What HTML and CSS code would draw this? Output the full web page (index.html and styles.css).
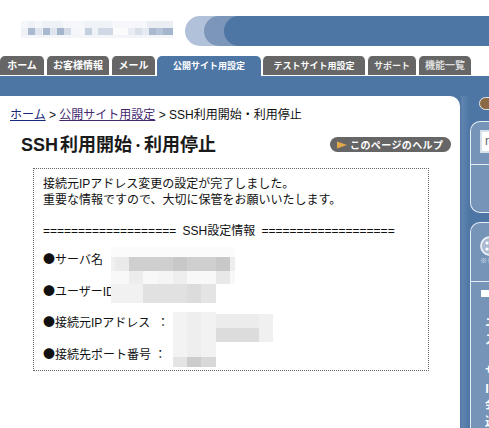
FILE: index.html
```html
<!DOCTYPE html>
<html lang="ja">
<head>
    <meta charset="UTF-8">
    <meta name="viewport" content="width=device-width, initial-scale=1.0">
    <title>SSH利用開始・利用停止</title>
    <link rel="stylesheet" href="styles.css">
</head>
<body>
    <header class="header">
        <svg class="logo" width="152" height="18" viewBox="21 20 152 18" shape-rendering="crispEdges" aria-hidden="true">
            <rect x="21" y="21" width="152" height="7" fill="#f6f7fa"/>
            <rect x="28" y="21" width="7" height="7" fill="#eef1f5"/>
            <rect x="42" y="21" width="21" height="7" fill="#eef1f5"/>
            <rect x="84" y="21" width="28" height="7" fill="#eff2f6"/>
            <rect x="147" y="21" width="26" height="7" fill="#eaeef3"/>
            <rect x="21" y="28" width="152" height="7" fill="#eef1f5"/>
            <rect x="28" y="28" width="7" height="7" fill="#a9bad0"/>
            <rect x="35" y="28" width="7" height="7" fill="#dfe5ee"/>
            <rect x="43" y="28" width="7" height="7" fill="#a9bad0"/>
            <rect x="50" y="28" width="7" height="7" fill="#dfe5ee"/>
            <rect x="57" y="28" width="7" height="7" fill="#a4b6cd"/>
            <rect x="64" y="28" width="7" height="7" fill="#d3dbe6"/>
            <rect x="71" y="28" width="14" height="7" fill="#f5f6f9"/>
            <rect x="85" y="28" width="7" height="7" fill="#c3cfde"/>
            <rect x="92" y="28" width="6" height="7" fill="#eef1f5"/>
            <rect x="98" y="28" width="15" height="7" fill="#cfd8e4"/>
            <rect x="113" y="28" width="15" height="7" fill="#fbfbfc"/>
            <rect x="128" y="28" width="7" height="7" fill="#e9edf3"/>
            <rect x="135" y="28" width="7" height="7" fill="#d8dfe9"/>
            <rect x="142" y="28" width="7" height="7" fill="#e6ebf1"/>
            <rect x="149" y="28" width="7" height="7" fill="#a9bad0"/>
            <rect x="156" y="28" width="7" height="7" fill="#b5c4d6"/>
            <rect x="163" y="28" width="10" height="7" fill="#a4b6cd"/>
            <rect x="21" y="35" width="152" height="3" fill="#f3f5f8"/>
        </svg>
        <div class="bar-light">
            <div class="bar-mid">
                <div class="bar-dark"></div>
            </div>
        </div>
    </header>

    <nav class="tabs">
        <a class="tab tab-home">ホーム</a>
        <a class="tab tab-account">お客様情報</a>
        <a class="tab tab-mail">メール</a>
        <a class="tab tab-site active">公開サイト用設定</a>
        <a class="tab tab-site small">テストサイト用設定</a>
        <a class="tab tab-support small">サポート</a>
        <a class="tab tab-list">機能一覧</a>
    </nav>
    <div class="band"></div>

    <div class="page">
        <main class="main">
            <p class="breadcrumb">
                <a class="crumb-home">ホーム</a> &gt; <a class="crumb-site">公開サイト用設定</a> &gt; SSH利用開始・利用停止
            </p>
            <div class="title-row">
                <h1><span class="title-latin">SSH</span>利用開始<span class="title-dot">・</span>利用停止</h1>
                <a class="help">
                    <svg width="10" height="8" viewBox="0 0 10 8" aria-hidden="true"><path d="M0 0.5 L10 4 L0 7.5 Z" fill="#e3a848"/></svg>
                    このページのヘルプ
                </a>
            </div>
            <div class="result">
                <p>接続元IPアドレス変更の設定が完了しました。<br>重要な情報ですので、大切に保管をお願いいたします。</p>
                <p class="rule">=================== SSH設定情報 ===================</p>
                <p class="item"><span class="bullet">●</span>サーバ名</p>
                <p class="item"><span class="bullet">●</span>ユーザーID</p>
                <p class="item"><span class="bullet">●</span>接続元IPアドレス&nbsp; ：</p>
                <p class="item"><span class="bullet">●</span>接続先ポート番号 ：</p>

                <!-- blurred values -->
                <svg class="mosaic" width="162" height="120" viewBox="111 247 162 120" shape-rendering="crispEdges" aria-hidden="true">
                    <rect x="111" y="247" width="124" height="10" fill="#fbfbfb"/>
                    <rect x="111" y="257" width="124" height="14" fill="#cfcfcf"/>
                    <rect x="111" y="257" width="4" height="14" fill="#f0f0f0"/>
                    <rect x="115" y="257" width="14" height="14" fill="#eaeaea"/>
                    <rect x="173" y="257" width="14" height="14" fill="#c8c8c8"/>
                    <rect x="216" y="257" width="14" height="14" fill="#c8c8c8"/>
                    <rect x="230" y="257" width="5" height="14" fill="#eeeeee"/>
                    <rect x="111" y="271" width="124" height="13" fill="#f8f8f8"/>
                    <rect x="129" y="271" width="14" height="13" fill="#ededed"/>
                    <rect x="158" y="271" width="15" height="13" fill="#f5f5f5"/>
                    <rect x="173" y="271" width="14" height="13" fill="#eeeeee"/>
                    <rect x="216" y="271" width="14" height="13" fill="#e8e8e8"/>
                    <rect x="111" y="284" width="32" height="19" fill="#f1f1f1"/>
                    <rect x="143" y="284" width="44" height="19" fill="#e1e1e1"/>
                    <rect x="187" y="284" width="14" height="19" fill="#dcdcdc"/>
                    <rect x="201" y="284" width="15" height="19" fill="#e4e4e4"/>
                    <rect x="173" y="312" width="14" height="45" fill="#f3f3f3"/>
                    <rect x="187" y="312" width="14" height="45" fill="#eeeeee"/>
                    <rect x="201" y="312" width="15" height="45" fill="#f2f2f2"/>
                    <rect x="173" y="357" width="14" height="10" fill="#e4e4e4"/>
                    <rect x="187" y="357" width="14" height="10" fill="#cccccc"/>
                    <rect x="201" y="357" width="15" height="10" fill="#d8d8d8"/>
                    <rect x="216" y="314" width="43" height="14" fill="#ececec"/>
                    <rect x="216" y="328" width="43" height="14" fill="#dcdcdc"/>
                    <rect x="259" y="314" width="14" height="28" fill="#f0f0f0"/>
                </svg>
            </div>
        </main>

        <aside class="side">
            <div class="side-pill"></div>
            <div class="panel panel-search">
                <div class="panel-top"><span class="search-input">r</span></div>
            </div>
            <div class="panel panel-info">
                <div class="panel-top">
                    <svg class="smile" width="20" height="20" viewBox="0 0 20 20" aria-hidden="true">
                        <circle cx="10" cy="10" r="9" fill="#a9bbd3" stroke="#eef2f7" stroke-width="1.8"/>
                        <circle cx="7" cy="7" r="1.6" fill="#ffffff"/>
                        <circle cx="7" cy="13" r="1.6" fill="#ffffff"/>
                    </svg>
                    <span class="note">※※</span>
                </div>
                <div class="panel-body">
                    <div class="side-bar"></div>
                    <ul class="side-list">
                        <li>ニ</li>
                        <li>ス</li>
                        <li class="gap">サ</li>
                        <li>Ⅲ</li>
                        <li>会</li>
                        <li>送</li>
                    </ul>
                </div>
            </div>
        </aside>
    </div>
</body>
</html>
```

FILE: styles.css
```css
html, body {
    height: 428px;
    overflow: hidden;
}

body {
    margin: 0;
    padding: 0;
    background-color: #ffffff;
    color: #111111;
    font-family: "Liberation Sans", "Noto Sans CJK JP", sans-serif;
    font-size: 12px;
}

p {
    margin: 0;
}

.header {
    display: flex;
    align-items: flex-start;
    height: 40px;
    padding-top: 16px;
    padding-left: 21px;
}

.logo {
    display: block;
    margin-top: 4px;
    margin-right: 12px;
    flex: none;
}

.bar-light,
.bar-mid,
.bar-dark {
    height: 30px;
    border-radius: 15px 0 0 15px;
}

.bar-light {
    flex: 1;
    padding-left: 19px;
    background-color: #b0c1d9;
}

.bar-mid {
    padding-left: 20px;
    background-color: #7b96b9;
}

.bar-dark {
    background-color: #4d76a5;
}

.tabs {
    display: flex;
    gap: 1px;
    height: 20px;
}

.tab {
    display: block;
    box-sizing: border-box;
    height: 20px;
    border: 1px solid #ffffff;
    border-top: 0;
    border-radius: 5px 5px 0 0;
    background-color: #666666;
    color: #ffffff;
    font-size: 10px;
    font-weight: bold;
    line-height: 20px;
    text-align: center;
}

.tab.small {
    font-size: 9px;
}

.tab-home { width: 45px; border-left: 0; }
.tab-account { width: 64px; }
.tab-mail { width: 45px; }
.tab-site { width: 104px; }
.tab-support { width: 50px; color: #f0f0f0; }
.tab-list { width: 53px; border-right: 0; color: #dddddd; }

.tab.active {
    border: 0;
    background-color: #4d76a5;
    font-size: 9px;
    height: 21px;
    margin-bottom: -1px;
}

.band {
    height: 20px;
    background-color: #4d76a5;
}

.page {
    display: flex;
    height: 332px;
    background: linear-gradient(to right, #4d76a5 460px, #5f84af 462px, #4d76a5 470px);
}

.main {
    flex: none;
    width: 460px;
    box-sizing: border-box;
    padding-top: 10px;
    background-color: #ffffff;
    border-radius: 0 10px 0 0;
}

.breadcrumb {
    padding-left: 10px;
    line-height: 18px;
    white-space: nowrap;
}

.crumb-home {
    color: #1a2a7a;
    text-decoration: underline;
}

.crumb-site {
    color: #44286e;
    text-decoration: underline;
}

.title-row {
    display: flex;
    justify-content: space-between;
    align-items: center;
    height: 20px;
    margin-top: 12px;
    padding: 0 9px 0 21px;
}

h1 {
    margin: 0;
    color: #1a1a1a;
    font-size: 18px;
    font-weight: bold;
    line-height: 20px;
    white-space: nowrap;
}

.title-latin {
    margin-right: 2px;
}

.title-dot {
    font-size: 12px;
}

.help {
    display: flex;
    align-items: center;
    gap: 3px;
    box-sizing: border-box;
    width: 121px;
    height: 15px;
    margin-top: -3px;
    padding-left: 7px;
    border-radius: 8px;
    background-color: #666666;
    color: #ffffff;
    font-size: 10px;
    font-weight: bold;
    letter-spacing: 0.4px;
    white-space: nowrap;
}

.result {
    position: relative;
    box-sizing: border-box;
    width: 396px;
    height: 203px;
    margin: 12px 0 0 33px;
    padding: 8px 9px;
    border: 1px dotted #666666;
    line-height: 15.75px;
}

.result p {
    margin-bottom: 15.75px;
    white-space: nowrap;
}

.result .rule {
    margin-bottom: 13px;
    word-spacing: 3px;
}

.bullet {
    font-family: "Noto Sans CJK JP", sans-serif;
    line-height: 0;
}

.mosaic {
    position: absolute;
    left: 77px;
    top: 78px;
}

.side {
    flex: none;
    width: 29px;
    padding-left: 10px;
    box-sizing: border-box;
    overflow: hidden;
}

.side-pill {
    width: 30px;
    height: 13px;
    margin-top: 1px;
    margin-left: 9px;
    box-sizing: border-box;
    border: 1px solid #e8e8e8;
    border-radius: 7px;
    background-color: #8a6a45;
}

.panel {
    box-sizing: border-box;
    width: 60px;
    border: 1px solid #e6ecf3;
    border-right: 0;
    border-radius: 10px 0 0 10px;
    background-color: #7693b8;
}

.panel-search {
    height: 92px;
    margin-top: 11px;
}

.panel-search .panel-top {
    box-sizing: border-box;
    height: 43px;
    padding: 8px 0 0 9px;
    border-bottom: 1px solid #e6ecf3;
}

.search-input {
    display: block;
    box-sizing: border-box;
    width: 40px;
    height: 23px;
    padding-left: 3px;
    border: 2px solid #d8e0ea;
    background-color: #ffffff;
    color: #666666;
    line-height: 19px;
}

.panel-info {
    height: 240px;
    margin-top: 9px;
    border-radius: 10px 0 0 0;
    border-bottom: 0;
}

.panel-info .panel-top {
    box-sizing: border-box;
    height: 59px;
    padding: 13px 0 0 9px;
    border-bottom: 1px solid #e6ecf3;
}

.smile {
    display: block;
}

.note {
    display: block;
    color: #dfe6ef;
    font-size: 7px;
    line-height: 9px;
}

.panel-body {
    padding: 8px 0 0 10px;
}

.side-bar {
    width: 20px;
    height: 7px;
    background-color: #ffffff;
}

.side-list {
    margin: 18px 0 0 4px;
    padding: 0;
    list-style: none;
    color: #ffffff;
    font-size: 12px;
    font-weight: bold;
    line-height: 16.5px;
}

.side-list .gap {
    margin-top: 16px;
}
```
